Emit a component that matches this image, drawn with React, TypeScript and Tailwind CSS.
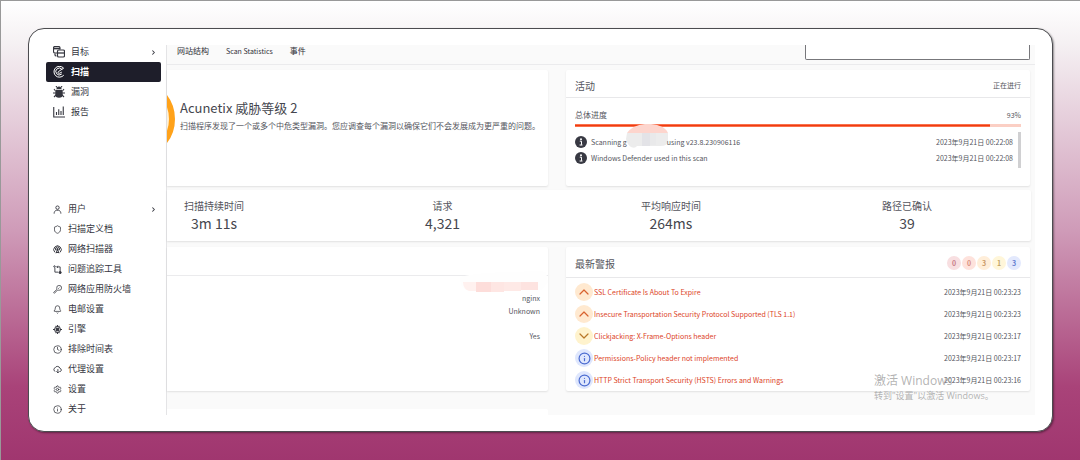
import React from "react";
import {
  Bell,
  ChevronDown,
  ChevronRight,
  ChevronUp,
  Clock,
  Info,
  Settings,
  Shield,
} from "lucide-react";

type NavItem = {
  label: string;
  icon: React.ReactNode;
  active?: boolean;
  expandable?: boolean;
};

type Severity = "medium" | "low" | "info";

type Alert = {
  title: string;
  severity: Severity;
  time: string;
};

function TargetsIcon() {
  return (
    <svg viewBox="0 0 24 24" className="size-3" fill="none" stroke="currentColor" strokeWidth="2.4">
      <path d="M8 14H4a3 3 0 0 1-3-3V4a3 3 0 0 1 3-3h7a3 3 0 0 1 3 3v3" />
      <path d="M1 5h13" strokeWidth="3.4" />
      <rect x="9" y="8" width="14" height="14" rx="2.5" />
      <path d="M9 14h14" strokeWidth="2.6" />
      <path d="M4 15v3q0 2 3 2" />
    </svg>
  );
}

function ScanIcon() {
  return (
    <svg viewBox="0 0 24 24" className="size-3" fill="none" stroke="currentColor" strokeWidth="2" strokeLinecap="round">
      <path d="M20 3A11 11 0 1 0 21 19" />
      <path d="M18 6.500A7 7 0 1 0 17 16.500" />
      <path d="M21 4.500 11 11a2 2 0 0 0 2 3.500l4-2" />
    </svg>
  );
}

function BugIcon() {
  return (
    <svg viewBox="0 0 24 24" className="size-3" fill="currentColor">
      <path d="M7 6a5 5 0 0 1 10 0z" />
      <path d="M6 7.500h12l1.500 4v5a7.500 7 0 0 1-15 0v-5z" />
      <path
        d="M5 10 2 6M19 10l3-4M5 14H0M19 14h5M6 18l-4 4M18 18l4 4M8 3 6 0M16 3l2-3"
        stroke="currentColor"
        strokeWidth="2.2"
      />
    </svg>
  );
}

function ReportsIcon() {
  return (
    <svg viewBox="0 0 24 24" className="size-3" fill="none" stroke="currentColor" strokeWidth="2.2">
      <path d="M1.500 2v20H24" />
      <path d="M7 18v-6M11.500 18V6.500M16 18v-8M20.500 18V1" />
    </svg>
  );
}

function UserIcon() {
  return (
    <svg viewBox="0 0 24 24" className="size-[9px]" fill="none" stroke="currentColor" strokeWidth="2.400">
      <circle cx="12" cy="7" r="4.500" />
      <path d="M3 23c0-5 2.500-8 6-9h6c3.500 1 6 4 6 9" />
    </svg>
  );
}

function ScannerIcon() {
  return (
    <svg viewBox="0 0 24 24" className="size-[9px]" fill="none" stroke="currentColor" strokeWidth="2.600">
      <path d="M5 19.500a10 10 0 1 1 14 0" />
      <path d="M8 14.500a5.500 5.500 0 1 1 8 0" />
      <circle cx="12" cy="11" r="2" fill="currentColor" />
      <path d="m12 12-4 10M12 12l4 10M8 20h8" />
    </svg>
  );
}

function TrackerIcon() {
  return (
    <svg viewBox="0 0 24 24" className="size-[9px]" fill="none" stroke="currentColor" strokeWidth="2.400">
      <circle cx="4" cy="4" r="2" />
      <path d="M5 7v12h9" />
      <path d="M19 17V5h-9M13 2l-3 3 3 3" />
      <circle cx="19" cy="20" r="3" fill="currentColor" />
    </svg>
  );
}

function FirewallIcon() {
  return (
    <svg viewBox="0 0 24 24" className="size-[9px]" fill="none" stroke="currentColor" strokeWidth="2" strokeLinejoin="round">
      <path d="M10 9a6.500 6.500 0 1 1 5 5l-3-.500L4 22l-2.500-2L10 12z" />
      <path d="m14 10 3-3" />
    </svg>
  );
}

function EngineIcon() {
  return (
    <svg viewBox="0 0 24 24" className="size-[9px]" fill="none" stroke="currentColor" strokeWidth="2.600">
      <circle cx="12" cy="12" r="8" />
      <rect x="8.500" y="8.500" width="7" height="7" fill="currentColor" />
      <path d="M12 0v5M12 19v5M0 12h5M19 12h5M8 2v3M16 2v3M8 19v3M16 19v3" />
    </svg>
  );
}

function ProxyIcon() {
  return (
    <svg viewBox="0 0 24 24" className="size-[9px]" fill="none" stroke="currentColor" strokeWidth="2.400">
      <path d="M6 17a5 5 0 0 1-.500-9.500A7 7 0 0 1 18.500 9a4.500 4.500 0 0 1 1 8.500H18" />
      <path d="M13 11v10M9 17l4 4 4-4" />
    </svg>
  );
}

function InfoDot() {
  return (
    <svg viewBox="0 0 12 12" className="size-3 shrink-0" aria-hidden="true">
      <circle cx="6" cy="6" r="6" fill="#383943" />
      <circle cx="6" cy="3.200" r="1" fill="#fff" />
      <path d="M4.800 5.200h1.700v3.600M4.600 9h2.900" stroke="#fff" strokeWidth="1" fill="none" />
    </svg>
  );
}

const primaryNav: NavItem[] = [
  { label: "目标", icon: <TargetsIcon />, expandable: true },
  { label: "扫描", icon: <ScanIcon />, active: true },
  { label: "漏洞", icon: <BugIcon /> },
  { label: "报告", icon: <ReportsIcon /> },
];

const secondaryNav: NavItem[] = [
  { label: "用户", icon: <UserIcon />, expandable: true },
  { label: "扫描定义档", icon: <Shield className="size-[9px]" /> },
  { label: "网络扫描器", icon: <ScannerIcon /> },
  { label: "问题追踪工具", icon: <TrackerIcon /> },
  { label: "网络应用防火墙", icon: <FirewallIcon /> },
  { label: "电邮设置", icon: <Bell className="size-[9px]" /> },
  { label: "引擎", icon: <EngineIcon /> },
  { label: "排除时间表", icon: <Clock className="size-[9px]" /> },
  { label: "代理设置", icon: <ProxyIcon /> },
  { label: "设置", icon: <Settings className="size-[9px]" /> },
  { label: "关于", icon: <Info className="size-[9px]" /> },
];

const stats = [
  { label: "扫描持续时间", value: "3m 11s" },
  { label: "请求", value: "4,321" },
  { label: "平均响应时间", value: "264ms" },
  { label: "路径已确认", value: "39" },
];

const alerts: Alert[] = [
  { title: "SSL Certificate Is About To Expire", severity: "medium", time: "2023年9月21日 00:23:23" },
  { title: "Insecure Transportation Security Protocol Supported (TLS 1.1)", severity: "medium", time: "2023年9月21日 00:23:23" },
  { title: "Clickjacking: X-Frame-Options header", severity: "low", time: "2023年9月21日 00:23:17" },
  { title: "Permissions-Policy header not implemented", severity: "info", time: "2023年9月21日 00:23:17" },
  { title: "HTTP Strict Transport Security (HSTS) Errors and Warnings", severity: "info", time: "2023年9月21日 00:23:16" },
];

const counts = [
  { value: 0, style: "bg-[#f8dfe1] text-[#c9808a]" },
  { value: 0, style: "bg-[#fee2dc] text-[#d98f80]" },
  { value: 3, style: "bg-[#ffeed9] text-[#c99a68]" },
  { value: 1, style: "bg-[#fff6d9] text-[#c0a265]" },
  { value: 3, style: "bg-[#e3e9fd] text-[#6480cf]" },
];

const severityStyles: Record<Severity, string> = {
  medium: "bg-[#ffe9d0] text-[#d8622f]",
  low: "bg-[#fff3cd] text-[#b8782a]",
  info: "bg-[#dfe7fd] text-[#4a6bd0]",
};

function SeverityBadge({ severity }: { severity: Severity }) {
  return (
    <span
      className={`flex size-[18px] shrink-0 items-center justify-center rounded-full ${severityStyles[severity]}`}
    >
      {severity === "medium" && <ChevronUp className="size-4" strokeWidth={1.8} />}
      {severity === "low" && <ChevronDown className="size-4" strokeWidth={1.8} />}
      {severity === "info" && <Info className="size-[13px]" strokeWidth={2.2} />}
    </span>
  );
}

function NavList({ items, compact }: { items: NavItem[]; compact?: boolean }) {
  return (
    <ul>
      {items.map((item) => (
        <li key={item.label}>
          <a
            href="#"
            className={`flex h-5 items-center rounded-xs pr-1 pl-[7px] ${
              compact ? "gap-[6px]" : "gap-[6px]"
            } ${item.active ? "bg-[#1e1e2a] font-bold text-white" : "text-[#34353e]"}`}
          >
            {item.icon}
            <span className="flex-1">{item.label}</span>
            {item.expandable && <ChevronRight className="size-[7px]" strokeWidth={3.5} />}
          </a>
        </li>
      ))}
    </ul>
  );
}

export default function App() {
  return (
    <div className="min-h-screen border-t border-l border-[#999] bg-[linear-gradient(#ffffff_0%,#f5f1f3_9%,#cf9bb8_50%,#a94379_84%,#a0366f_100%)] p-[27px] font-['Noto_Sans_CJK_SC',sans-serif] text-[8px] text-[#54555d]">
      <div className="relative flex rounded-2xl border border-[#4c4c50] bg-white shadow-[1px_1px_2px_#00000066]">
        <nav className="flex w-[137px] shrink-0 flex-col justify-between pt-[13px] pr-[5px] pb-3 pl-[17px] text-[9px] leading-5">
          <NavList items={primaryNav} />
          <NavList items={secondaryNav} compact />
        </nav>

        <main className="my-4 mr-[17px] min-w-0 flex-1 border-l border-[#e4e4e6] bg-[#fafafa]">
          <header className="flex h-5 items-start justify-between border-b border-[#ebebed] pr-[5px] pl-[10px]">
            <div className="flex gap-[17px] leading-3 text-[#2f3038]">
              <a href="#">网站结构</a>
              <a href="#" className="text-[7px]">
                Scan Statistics
              </a>
              <a href="#">事件</a>
            </div>
            <input
              aria-label="搜索"
              className="h-[15px] w-[225px] rounded-b-xs border border-t-0 border-[#77777b] bg-white"
            />
          </header>

          <div className="mt-[5px] mr-[5px] grid grid-cols-[381fr_464fr] gap-[18px]">
            <section className="flex h-[116px] items-start rounded-r-xs bg-white shadow-[0_1px_2px_#0000001a]">
              {/* right edge of the threat gauge */}
              <svg viewBox="0 0 13 116" className="h-[116px] w-[13px] shrink-0" aria-hidden="true">
                <circle cx="-32" cy="49" r="33" fill="none" stroke="#fff1d6" strokeWidth="3" />
                <circle cx="-32" cy="49" r="37" fill="none" stroke="#ffa21a" strokeWidth="6" />
              </svg>
              <div className="pt-7">
                <h1 className="text-[13px] leading-5 text-[#45464e]">Acunetix 威胁等级 2</h1>
                <p className="leading-4 whitespace-nowrap">
                  扫描程序发现了一个或多个中危类型漏洞。您应调查每个漏洞以确保它们不会发展成为更严重的问题。
                </p>
              </div>
            </section>

            <section className="rounded-xs bg-white shadow-[0_1px_2px_#0000001a]">
              <div className="flex h-7 items-center justify-between border-b border-[#e8e8ea] px-[9px] pt-1">
                <h2 className="text-[10px]">活动</h2>
                <span className="text-[7px]">正在进行</span>
              </div>
              <div className="px-[9px] pt-2">
                <div className="flex h-[18px] items-center justify-between">
                  <span>总体进度</span>
                  <span className="text-[7px]">93%</span>
                </div>
                <div className="h-[3px] bg-[#fbcfc4]">
                  <div className="h-full border-y border-[#f9704c] bg-[#f03c10]" style={{ width: "93%" }} />
                </div>
                <div className="mt-[5px] flex h-9 justify-between border-r-3 border-[#d0d0d2] pt-[2px] pr-[5px] text-[7px] leading-4">
                  <ul>
                    <li className="flex items-center gap-1">
                      <InfoDot />
                      <span className="flex">
                        Scanning g
                        <span className="relative w-10">
                          <svg
                            viewBox="0 0 43 24"
                            className="absolute -top-[10px] -left-[1px] h-6 w-[43px]"
                            aria-hidden="true"
                          >
                            <path d="M1 9C6 2 14 0 22 0s17 2 20 9z" fill="#fdd5cd" />
                            <path d="M1 9h41v8q0 5-8 5H11q-2 3-6 1-4-3-5-8z" fill="#ececec" />
                            <path d="M16 9h8v13h-8z" fill="#e3e3e7" />
                            <path d="M24 9h6v12h-6z" fill="#e9e9ea" />
                          </svg>
                        </span>
                        <span className="relative">using v23.8.230906116</span>
                      </span>
                    </li>
                    <li className="flex items-center gap-1">
                      <InfoDot />
                      Windows Defender used in this scan
                    </li>
                  </ul>
                  <div className="text-right">
                    <p>2023年9月21日 00:22:08</p>
                    <p>2023年9月21日 00:22:08</p>
                  </div>
                </div>
              </div>
            </section>
          </div>

          <section className="mt-1 mr-1 flex h-[51px] justify-between rounded-r-xs bg-white pt-[9px] pr-[99px] pl-[17px] shadow-[0_1px_2px_#0000001a]">
            {stats.map((stat) => (
              <div key={stat.label} className="text-center">
                <p className="text-[10px] leading-[14px]">{stat.label}</p>
                <p className="text-[14px] leading-5 text-[#45464e]">{stat.value}</p>
              </div>
            ))}
          </section>

          <div className="mt-[6px] mr-[5px] grid grid-cols-[381fr_464fr] gap-[18px]">
            <section className="rounded-r-xs bg-white shadow-[0_1px_2px_#0000001a]">
              <div className="h-[29px] border-b border-[#ebebed]" />
              <div className="relative px-2 pt-4 text-right text-[7px] leading-[13px]">
                <svg viewBox="0 0 88 24" className="absolute -top-[6px] right-0 h-6 w-[88px]" aria-hidden="true">
                  <path d="M0 7Q20 2 60 2q15-3 26 0l2 10-6 8H6Q0 18 0 7z" fill="#fefefe" />
                  <path d="M3 12h13v9H9q-6-2-6-9z" fill="#fff1ef" />
                  <path d="M16 12h15v10H16z" fill="#fdddda" />
                  <path d="M31 12h13v10H31z" fill="#fee6e3" />
                  <path d="M44 12h17v9H44z" fill="#fee9e6" />
                  <path d="M61 12h17v8H61z" fill="#fde3e0" />
                </svg>
                <p>nginx</p>
                <p className="mb-3">Unknown</p>
                <p>Yes</p>
              </div>
            </section>

            <section className="rounded-xs bg-white shadow-[0_1px_2px_#0000001a]">
              <div className="flex h-[31px] items-center justify-between border-b border-[#e8e8ea] px-[9px] pt-[2px]">
                <h2 className="text-[10px]">最新警报</h2>
                <div className="flex gap-px">
                  {counts.map((count, i) => (
                    <span
                      key={i}
                      className={`flex size-[14px] items-center justify-center rounded-full text-[7px] font-bold ${count.style}`}
                    >
                      {count.value}
                    </span>
                  ))}
                </div>
              </div>
              <ul className="px-[9px] pt-[3px] text-[7px]">
                {alerts.map((alert) => (
                  <li key={alert.title} className="flex h-[22px] items-center gap-px">
                    <SeverityBadge severity={alert.severity} />
                    <a href="#" className="flex-1 text-[#dc4326]">
                      {alert.title}
                    </a>
                    <span>{alert.time}</span>
                  </li>
                ))}
              </ul>
            </section>
          </div>

          <div className="mt-[18px] mr-[5px] grid grid-cols-[381fr_464fr] gap-[18px]">
            <div className="h-[6px] rounded-tr-xs bg-white" />
          </div>
        </main>

        {/* system activation notice floats above the page */}
        <div className="pointer-events-none absolute right-[54px] bottom-7 w-[124px] font-['Open_Sans','Noto_Sans_CJK_SC',sans-serif] whitespace-nowrap text-[#a0a0a0]/80">
          <p className="text-[12px] leading-4">激活 Windows</p>
          <p className="text-[9px] leading-[14px]">转到"设置"以激活 Windows。</p>
        </div>
      </div>
    </div>
  );
}
